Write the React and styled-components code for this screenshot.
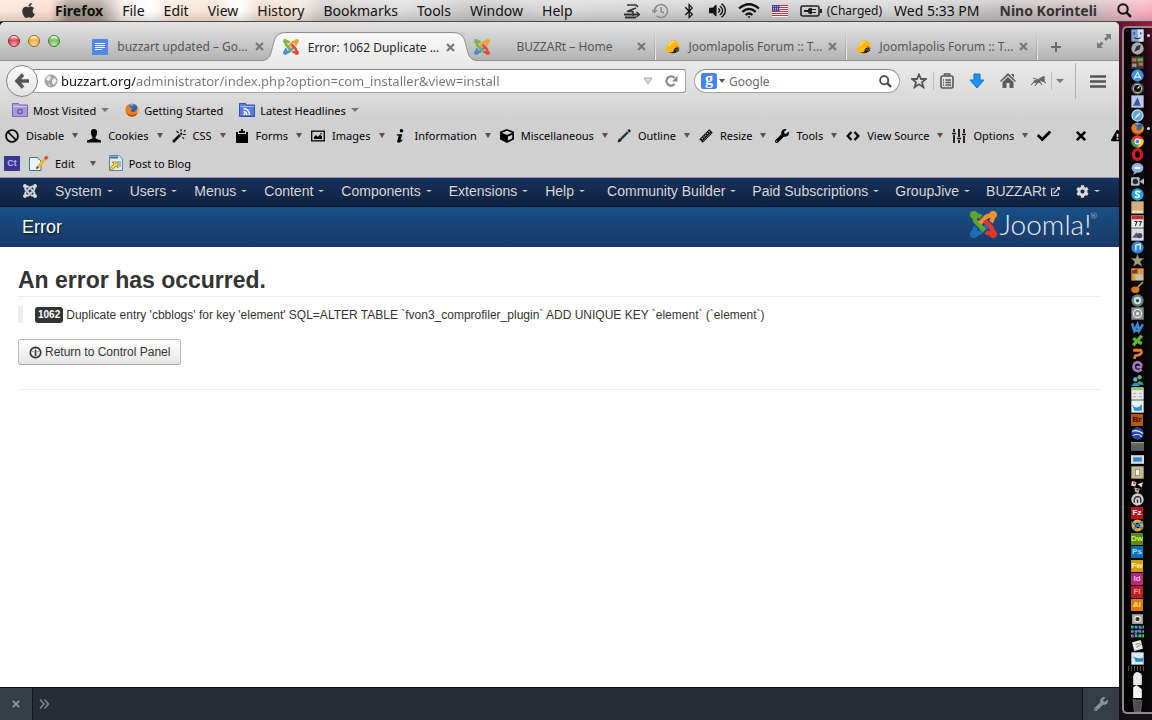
import React from 'react'
import { useState } from 'react'
import styled, { createGlobalStyle } from 'styled-components'
import {
  FaApple, FaBan, FaBluetoothB, FaCheck, FaCog, FaCube, FaExclamationTriangle,
  FaExternalLinkAlt, FaJoomla, FaTimes, FaVolumeUp, FaWrench
} from 'react-icons/fa'

const uiFont = '"Noto Sans", "Open Sans", sans-serif'
const pageFont = '"Liberation Sans", Arial, sans-serif'

const GlobalStyle = createGlobalStyle`
  * { box-sizing: border-box; }
  body { margin: 0; background: #0b0a0c; font-family: ${uiFont}; overflow: hidden; }
  button { font: inherit; color: inherit; background: none; border: 0; padding: 0; margin: 0; cursor: default; }
  a { color: inherit; text-decoration: none; }
  svg { display: block; flex: none; }
`

const Desktop = styled.div`
  display: flex;
  flex-direction: column;
  height: 100vh;
`

const Workspace = styled.div`
  display: flex;
  flex: 1;
  min-height: 0;
  background: radial-gradient(circle at 100% 0, #a01c42 0, #5a1229 40px, #1c0a10 130px, #131113 220px);
`

/* ---------- mac menu bar ---------- */

const MenuBar = styled.header`
  display: flex;
  align-items: center;
  height: 22px;
  flex: none;
  padding: 0 20px;
  border-bottom: 1px solid #4a4546;
  font-size: 14px;
  color: #111;
  white-space: nowrap;
  background:
    linear-gradient(180deg, rgba(255,255,255,.35), rgba(255,255,255,0) 50%, rgba(0,0,0,.12)),
    linear-gradient(90deg, #fde6dc 0, #fbdccd 50px, #a19389 68px, #a79a91 100px, #f3ece8 122px, #fff 150px,
      #fbe8d9 170px, #f6e3d4 215px, #fff 240px, #eed9c6 262px, #f4e6dc 300px, #cfcac8 325px, #ddd 400px,
      #c4c3c3 480px, #d8d8d8 560px, #cbcbcb 760px, #d5d4d5 900px, #c0bcbc 1000px, #cdb9bd 1090px, #f3b5c4 1140px, #f8a9bd 100%);
`

const MenuList = styled.nav`
  display: flex;
  align-items: center;
  gap: 19px;
  margin-left: 18px;
`

const MenuItem = styled.button`
  font-weight: ${p => p.$bold ? 700 : 400};
`

const StatusArea = styled.div`
  display: flex;
  align-items: center;
  gap: 12px;
  margin-left: auto;
`

const StatusText = styled.span`
  margin-left: ${p => p.$bold ? 8 : 0}px;
  font-size: ${p => p.$small ? 12 : 14}px;
  font-weight: ${p => p.$bold ? 700 : 400};
  color: ${p => p.$bold ? '#333' : '#111'};
`

const Power = styled.div`
  display: flex;
  align-items: center;
  gap: 5px;
`

const SearchSlot = styled.button`
  margin-left: 8px;
`

/* ---------- browser ---------- */

const Browser = styled.div`
  display: flex;
  flex-direction: column;
  flex: 1;
  min-width: 0;
  border-radius: 5px 5px 0 0;
  overflow: hidden;
  background: #fff;
`

const TabStrip = styled.div`
  display: flex;
  height: 39px;
  flex: none;
  background: linear-gradient(180deg, #e4e4e4, #d6d6d6 30%, #b4b4b4);
  border-bottom: 1px solid #8e8e8e;
`

const Lights = styled.div`
  display: flex;
  gap: 8px;
  width: 83px;
  flex: none;
  padding: 13px 0 0 8px;
`

const Light = styled.button`
  width: 12px;
  height: 12px;
  border-radius: 50%;
  border: 1px solid ${p => p.$edge};
  background: radial-gradient(circle at 50% 90%, #fff9 0, transparent 60%), linear-gradient(180deg, #fff 5%, ${p => p.$color} 40%, ${p => p.$color});
`

const Tab = styled.div`
  position: relative;
  display: flex;
  align-items: center;
  flex: 0 1 191px;
  min-width: 0;
  padding: 11px 10px 0 9px;
  color: #555;
  font-size: 12px;
  z-index: ${p => p.$active ? 1 : 0};
  ${p => p.$active && `
    height: 29px;
    margin-top: 10px;
    padding-top: 1px;
    background: linear-gradient(180deg, #fafafa, #eaeaea);
    box-shadow: inset 0 1px 0 #8e8e8e, 0 1px 0 #eaeaea;
    color: #222;
  `}
  ${p => p.$divided && `
    background:
      linear-gradient(180deg, transparent 20%, #eee) right / 1px 100% no-repeat,
      linear-gradient(180deg, transparent 20%, #a0a0a0) right 1px top 0 / 1px 100% no-repeat;
  `}
`

const TabCurve = styled.svg`
  position: absolute;
  top: 0;
  ${p => p.$side}: -12px;
  ${p => p.$side === 'right' && 'transform: scaleX(-1);'}
`

const TabIcon = styled.span`
  position: relative;
`

const TabLabel = styled.span`
  position: relative;
  flex: 1;
  padding: 0 4px 0 6px;
  text-align: center;
  overflow: hidden;
  white-space: nowrap;
`

const TabClose = styled.button`
  position: relative;
  color: #777;
`

const TabTail = styled.div`
  display: flex;
  flex: 1;
  justify-content: space-between;
  align-items: flex-start;
  padding: 19px 8px 0 12px;
  color: #666;
`

const FullScreen = styled.button`
  margin-top: -7px;
`

const Toolbars = styled.div`
  flex: none;
  height: 117px;
  background: linear-gradient(180deg, #eaeaea, #d0d0d0 60px, #d0d0d0);
  border-bottom: 1px solid #9a9a9a;
`

const NavBar = styled.div`
  display: flex;
  align-items: center;
  height: 40px;
  padding: 0 13px 0 6px;
`

const BackButton = styled.button`
  position: relative;
  display: grid;
  place-items: center;
  width: 32px;
  height: 32px;
  border: 1px solid #838383;
  border-radius: 50%;
  background: linear-gradient(180deg, #fdfdfd, #e2e2e2);
  z-index: 1;
`

const UrlBox = styled.div`
  display: flex;
  align-items: center;
  flex: 1;
  height: 24px;
  margin-left: -5px;
  padding: 0 7px 0 10px;
  border: 1px solid #a0a0a0;
  border-top-color: #858585;
  border-radius: 0 3px 3px 0;
  background: #fff;
`

const UrlInput = styled.input`
  flex: 1;
  min-width: 0;
  height: 20px;
  margin-left: 3px;
  padding: 0;
  border: 0;
  outline: 0;
  font: 13px ${uiFont};
  color: transparent;
  background: linear-gradient(90deg, #111 74px, #757575 74px);
  background-clip: text;
  -webkit-background-clip: text;
`

const UrlTail = styled.div`
  display: flex;
  align-items: center;
  gap: 12px;
`

const SearchBox = styled.form`
  display: flex;
  align-items: center;
  width: 206px;
  height: 24px;
  margin: 0 11px 0 8px;
  padding: 0 7px 0 6px;
  border: 1px solid #a0a0a0;
  border-top-color: #858585;
  border-radius: 12px;
  background: #fff;
  color: #444;
`

const SearchInput = styled.input`
  flex: 1;
  min-width: 0;
  margin-left: 4px;
  padding: 0;
  border: 0;
  outline: 0;
  background: none;
  font: 12px ${uiFont};
  color: #555;
  &::placeholder { color: #666; opacity: 1; }
`

const Engine = styled.button`
  display: flex;
  align-items: center;
  gap: 2px;
`

const EngineBadge = styled.span`
  width: 16px;
  height: 16px;
  border-radius: 2px;
  background: #4683ee;
  color: #fff;
  text-align: center;
  font: bold 16px/12px "Liberation Serif", serif;
`

const NavIcons = styled.div`
  display: flex;
  align-items: center;
  gap: 15px;
`

const IconPair = styled.div`
  display: flex;
  align-items: center;
  gap: ${p => p.$gap}px;
`

const Rule = styled.span`
  width: 1px;
  height: ${p => p.$tall ? 36 : 18}px;
  margin: ${p => p.$tall ? '0 -1px 0 -4px' : 0};
  background: ${p => p.$tall ? '#a9b4c0' : '#bbb'};
`

const BookmarkBar = styled.div`
  display: flex;
  align-items: center;
  gap: 16px;
  height: 18px;
  padding-left: 12px;
  font-size: 11px;
`

const Bookmark = styled.button`
  display: flex;
  align-items: center;
  gap: 5px;
`

const DevBar = styled.div`
  display: flex;
  align-items: center;
  height: 33px;
  padding-left: 5px;
  font-size: 11px;
  overflow: hidden;
  white-space: nowrap;
`

const DevItem = styled.button`
  display: flex;
  align-items: center;
  flex: none;
  padding-right: ${p => p.$lone ? 23 : 9}px;
`

const DevLabel = styled.span`
  padding: 0 8px 0 7px;
`

const BlogBar = styled.div`
  display: flex;
  align-items: center;
  height: 22px;
  padding-left: 4px;
  font-size: 11px;
`

const BlogItem = styled.button`
  display: flex;
  align-items: center;
  margin-right: ${p => p.$after}px;
`

const BlogLabel = styled.span`
  padding: 0 15px 0 6px;
`

const Caret = styled.span`
  width: 0;
  height: 0;
  flex: none;
  border: ${p => p.$size || 3}px solid transparent;
  border-top: ${p => p.$drop || 5}px solid ${p => p.$color || '#555'};
  border-bottom: 0;
`

/* ---------- joomla page ---------- */

const AdminBar = styled.nav`
  display: flex;
  align-items: center;
  flex: none;
  height: 29px;
  padding: 0 19px 2px 22px;
  background: linear-gradient(180deg, #17315c, #10223e);
  border-bottom: 1px solid #0b1526;
  font: 14px ${pageFont};
  color: #dadada;
  text-shadow: 0 -1px 0 rgba(0,0,0,.3);
  white-space: nowrap;
`

const AdminGroup = styled.div`
  display: flex;
  align-items: center;
  gap: ${p => p.$push ? 16 : 17}px;
  margin-left: ${p => p.$push ? 'auto' : '17px'};
`

const AdminLink = styled.a`
  display: flex;
  align-items: center;
  gap: 5px;
`

const TitleBar = styled.div`
  display: flex;
  align-items: center;
  justify-content: space-between;
  flex: none;
  height: 40px;
  padding: 0 22px;
  background: linear-gradient(180deg, #185085, #1a3867);
`

const PageTitle = styled.h1`
  margin: 0;
  font: 18px ${pageFont};
  color: #fff;
  text-shadow: 1px 1px 2px rgba(0,0,0,.8);
`

const Brand = styled.div`
  display: flex;
  align-items: center;
  gap: 3px;
  margin-bottom: 6px;
  font: 300 28px/28px Lato, sans-serif;
  color: #e8edf5;
`

const Registered = styled.sup`
  align-self: flex-start;
  margin-left: -4px;
  font-size: 8px;
  line-height: 12px;
`

const Main = styled.main`
  flex: 1;
  padding: 18px 18px 0;
  font: 12px ${pageFont};
  color: #333;
`

const Heading = styled.h2`
  margin: 0;
  padding-bottom: 1px;
  border-bottom: 1px solid #eee;
  font: bold 23px/30px ${pageFont};
`

const Message = styled.blockquote`
  display: flex;
  align-items: center;
  gap: 3px;
  margin: 9px 0 16px;
  height: 17px;
  padding-left: 12px;
  border-left: 5px solid #eee;
`

const Code = styled.span`
  padding: 0 3px;
  border-radius: 3px;
  background: #333;
  color: #fff;
  font-size: 10px;
  font-weight: 700;
  line-height: 16px;
`

const ReturnLink = styled.a`
  display: inline-flex;
  align-items: center;
  gap: 3px;
  height: 26px;
  padding: 0 10px;
  border: 1px solid #bbb;
  border-bottom-color: #a2a2a2;
  border-radius: 3px;
  background: linear-gradient(180deg, #fff, #e6e6e6);
`

const Divider = styled.hr`
  margin: 24px 0 0;
  border: 0;
  border-top: 1px solid #eee;
`

const DevConsole = styled.footer`
  display: flex;
  flex: none;
  height: 33px;
  border-top: 1px solid #0d1013;
  background: #252c33;
  color: #8d9399;
`

const ConsoleCell = styled.button`
  display: grid;
  place-items: center;
  width: ${p => p.$width}px;
  margin-left: ${p => p.$end ? 'auto' : 0};
  border: 0 solid #15191d;
  border-width: ${p => p.$end ? '0 0 0 1px' : p.$first ? '0 1px 0 0' : 0};
  background: ${p => p.$first || p.$end ? '#343c45' : 'none'};
`

/* ---------- dock ---------- */

const DockArea = styled.aside`
  display: flex;
  width: 33px;
  flex: none;
  padding: 4px 0 6px 3px;
`

const DockPanel = styled.div`
  display: flex;
  flex-direction: column;
  flex: 1;
  padding: 1px 0 0;
  border: 2px solid #8c8a8c;
  border-right: 0;
  border-radius: 5px 0 0 5px;
  background: linear-gradient(90deg, rgba(0,0,0,.85) 55%, rgba(0,0,0,.45));
`

const DockItem = styled.button`
  display: flex;
  align-items: center;
  flex: 1 1 0;
  min-height: 0;
  padding-left: 7px;
  gap: 3px;
`

const DockSplit = styled.span`
  height: 5px;
  margin: 1px 8px 1px 4px;
  background: repeating-linear-gradient(90deg, #555 0 1px, transparent 1px 3px);
`

const Running = styled.span`
  width: 3px;
  height: 3px;
  border-radius: 50%;
  background: #cfe0ff;
`

const AppTile = styled.span`
  width: ${p => p.$large ? 16 : 12}px;
  height: ${p => p.$large ? 15 : 12}px;
  overflow: hidden;
  background: ${p => p.$bg};
  color: ${p => p.$fg};
  text-align: center;
  font: bold ${p => p.$large ? '9px/15px' : '8px/12px'} ${pageFont};
`

/* ---------- drawings ---------- */

function JoomlaMark({ size, muted }) {
  const colors = muted ? ['#7ab648', '#f5a13a', '#ea4a35', '#4b8fd0'] : ['#5fa52d', '#f78f2c', '#e5352c', '#1a6fb8']
  return (
    <svg width={size} height={size} viewBox="0 0 24 24">
      {colors.map((c, i) => (
        <g key={c} transform={`rotate(${i * 90} 12 12)`} stroke={c} fill="none" strokeWidth="4">
          <circle cx="3.400" cy="3.400" r="3.400" fill={c} stroke="none" />
          <path d="M4 4Q3.600 8.200 5.800 10.200L11 15.400" />
          <path d="M4 4Q8 3.600 9.800 5.400" />
        </g>
      ))}
      <path d="M9 13.400L12.800 17.200" stroke={colors[0]} strokeWidth="4" />
    </svg>
  )
}

function CloseX({ size }) {
  return (
    <svg width={size} height={size} viewBox="0 0 9 9" stroke="currentColor" strokeWidth="2.200">
      <path d="M1 1L8 8M8 1L1 8" />
    </svg>
  )
}

function Magnifier({ size }) {
  return (
    <svg width={size} height={size} viewBox="0 0 14 14" fill="none" stroke="currentColor">
      <circle cx="5.600" cy="5.600" r="4.400" strokeWidth="1.900" />
      <path d="M9 9L13 13" strokeWidth="2.400" />
    </svg>
  )
}

function Hat() {
  return (
    <svg width="16" height="16" viewBox="0 0 16 16">
      <path d="M3 13Q9 16 14.500 11.500L12 8L6 10Z" fill="#2c2010" />
      <path d="M.5 11C1 9 2 9 2.500 7.500C3 3 6 1 9 1.300C12.500 1.800 14.500 5 14.500 9C12 7.500 9 8.500 8.500 12C7 14.500 1 14 .5 11Z" fill="#fbb912" />
      <path d="M4 7Q5 3 9 2.800" stroke="#ffde70" strokeWidth="1.500" fill="none" />
      <path d="M11 7.500L14.500 9.500" stroke="#d4401e" strokeWidth="1.300" />
      <path d="M10 10.500L13.500 11.500" stroke="#5b8d2a" />
    </svg>
  )
}

function FoxBall({ size }) {
  return (
    <svg width={size} height={size} viewBox="0 0 16 16">
      <circle cx="8" cy="8" r="7.500" fill="#e8701a" />
      <circle cx="8.800" cy="6.200" r="5.200" fill="#2b62b0" />
      <path d="M5 1.500Q9 0 12 3Q8 2 7 4Z" fill="#63b5e8" />
      <path d="M.6 6Q2 2 4 2.500L6 5L9 6.500Q6 7 7 9.500Q10 12 13 8L15.300 6Q16 14 9 15.500Q1 15.500 .6 6" fill="#ee7c1b" />
      <path d="M1 9Q3 14 8 14Q12 14 14.500 10Q13 15.500 8 15.500Q2 15 1 9" fill="#c43a14" />
      <path d="M14.800 4Q16.500 9 13 12.500Q14.500 8 14.800 4" fill="#ffd23c" />
    </svg>
  )
}

function Folder({ top, bottom, children }) {
  return (
    <svg width="16" height="14" viewBox="0 0 16 14">
      <path d="M.5 .5H6.500L7.500 2H15.500V13.500H.5Z" fill={bottom} stroke={top} />
      <path d="M1 3.500H15" stroke="#fff" strokeOpacity=".5" />
      {children}
    </svg>
  )
}

function Flag() {
  return (
    <svg width="16" height="12" viewBox="0 0 16 12">
      <rect width="16" height="12" fill="#f4f0f0" />
      <path d="M0 .5H16M0 2.500H16M0 4.500H16M0 6.500H16M0 8.500H16M0 10.500H16" stroke="#c0303c" />
      <rect width="8" height="6" fill="#3b4a8c" />
      <path d="M1 1.500H8M1 3.500H8M1 5H8" stroke="#aab4e0" strokeDasharray="1 1" />
    </svg>
  )
}

const devIcons = {
  Disable: <FaBan size={14} />,
  Cookies: <svg width="14" height="14" viewBox="0 0 14 14"><path d="M7 0C9.500 0 10.500 2 10 4.500Q9.500 7 8.500 8V9.500L14 11.500V13.500H0V11.500L5.500 9.500V8Q4.500 7 4 4.500C3.500 2 4.500 0 7 0Z" /></svg>,
  CSS: <svg width="14" height="14" viewBox="0 0 14 14" stroke="#111" fill="none"><path d="M1 13L8 6" strokeWidth="2.600" /><path d="M8.500 5.500L10 4" strokeWidth="2" /><path d="M9 0V2.500M4.500 2L6.500 4M13.500 1L12 2.500M11 5.500H14M10.500 8L12 10" strokeWidth="1.200" /></svg>,
  Forms: <svg width="14" height="14" viewBox="0 0 14 14"><path d="M1 3H3V5H11V3H13V14H1ZM4 2H6V0H8V2H10V4H4Z" /></svg>,
  Images: <svg width="14" height="12" viewBox="0 0 14 12"><rect x=".7" y="1.200" width="12.600" height="9.600" fill="none" stroke="#111" strokeWidth="1.400" /><path d="M3 9V7L5 5L7 7L9 4.500L11 6.500V9Z" /><circle cx="10" cy="3.800" r=".8" /></svg>,
  Information: <svg width="14" height="14" viewBox="0 0 14 14"><circle cx="7.500" cy="1.800" r="1.800" /><path d="M3 5.200H8.300L6.500 11.500L8.500 10.500L8.500 11.500Q6 14 4 13.800Q2.800 13.400 3.300 11.500L4.800 6.500H2.800Z" /></svg>,
  Miscellaneous: <FaCube size={14} />,
  Outline: <svg width="14" height="14" viewBox="0 0 14 14"><path d="M.5 13.500L2 9.500L4.500 12Z" /><path d="M3 11L11 3" stroke="#333" strokeWidth="2.400" /><path d="M11.500 2.500L13 1" stroke="#111" strokeWidth="2.600" /></svg>,
  Resize: <svg width="14" height="14" viewBox="0 0 14 14"><path d="M2 12L12 2" stroke="#111" strokeWidth="5" /><path d="M3 10L10.500 2.500" stroke="#ddd" strokeDasharray="1 1.400" strokeWidth="1.200" /><path d="M4 12L12 4" stroke="#777" strokeWidth=".8" /></svg>,
  Tools: <FaWrench size={14} />,
  'View Source': <svg width="14" height="14" viewBox="0 0 14 14" fill="none" stroke="#111" strokeWidth="2.400"><path d="M5.500 3L1.700 7L5.500 11M8.500 3L12.300 7L8.500 11" /></svg>,
  Options: <svg width="14" height="14" viewBox="0 0 14 14" stroke="#111" strokeWidth="1.800"><path d="M2 0V3M2 6V14M7 0V8M7 11V14M12 0V4M12 7V14" /><path d="M0 4.500H4M5 9.500H9M10 5.500H14" strokeWidth="1.600" /></svg>
}

const tabs = [
  { title: 'buzzart updated – Go...', icon: 'docs' },
  { title: 'Error: 1062 Duplicate ...', icon: 'joomla', active: true },
  { title: 'BUZZARt – Home', icon: 'joomla', divided: true },
  { title: 'Joomlapolis Forum :: T...', icon: 'hat', divided: true },
  { title: 'Joomlapolis Forum :: T...', icon: 'hat', divided: true }
]

const tabIcons = {
  docs: (
    <svg width="16" height="16" viewBox="0 0 16 16">
      <rect width="16" height="16" rx="1" fill="#4f87ee" />
      <path d="M3 4.500H13M3 6.500H13M3 8.500H13M3 10.500H10" stroke="#fff" />
    </svg>
  ),
  joomla: <JoomlaMark size={16} muted />,
  hat: <Hat />
}

// small round or square pictures of the dock, drawn in a 12x12 box
const disc = (fill, extra) => <><circle cx="6" cy="6" r="5.700" fill={fill} />{extra}</>
const slab = (fill, extra) => <><rect x=".3" y=".3" width="11.400" height="11.400" fill={fill} />{extra}</>

const dockApps = [
  { name: 'Finder', running: true, art: slab('#7ea3dc', <><path d="M6 .5H11.500V11.500H7Z" fill="#d5e0f0" /><path d="M3 3V5M9 3V5M3 8Q6 10 9 8" stroke="#223" fill="none" /></>) },
  { name: 'Launchpad', art: disc('#a9adb0', <path d="M3 9L5 4L9 2.500L8 7Z" fill="#333" />) },
  { name: 'Mission Control', art: slab('#3b3f42', <><path d="M1 2H5V5H1ZM7 6H11V9H7Z" fill="#c86a35" /><path d="M6 2H11V5H6Z" fill="#6aa84f" /><path d="M1 7H5V10H1Z" fill="#999" /></>) },
  { name: 'App Store', art: disc('#3f8fe0', <path d="M3 9L6 3L9 9M3 7.500H9" stroke="#e8f3ff" fill="none" />) },
  { name: 'Dashboard', art: disc('#555', <><circle cx="6" cy="6" r="3.800" fill="#111" stroke="#bbb" /><path d="M6 6L8 4" stroke="#fff" /></>) },
  { name: 'Mail', art: slab('#b9cbe8', <path d="M2 10L6 2L9 10Z" fill="#3d5b9c" />) },
  { name: 'Safari', art: disc('#5aa5dc', <><circle cx="6" cy="6" r="5" fill="none" stroke="#cfd6da" /><path d="M3 9L5.500 5L9 3L7 7Z" fill="#f3f3f3" /></>) },
  { name: 'Firefox', running: true, fox: true },
  { name: 'Chrome', art: disc('#e33b2e', <><path d="M.8 3.500A5.700 5.700 0 0 0 6 11.700L8 7.500L4 7.500Z" fill="#3ba648" /><path d="M6 4H11.300A5.700 5.700 0 0 1 6 11.700L8 7Z" fill="#f8cf2c" /><circle cx="6" cy="6" r="2.300" fill="#4a86e8" stroke="#fff" /></>) },
  { name: 'Opera', art: <ellipse cx="6" cy="6" rx="3.800" ry="4.500" fill="none" stroke="#d8162a" strokeWidth="3" /> },
  { name: 'Messages', art: <><ellipse cx="6" cy="5.500" rx="5.500" ry="4.500" fill="#8eb0f0" /><path d="M3 9L2 12L6 9.500" fill="#8eb0f0" /><path d="M3 5.500H9" stroke="#fff" strokeWidth="2" /></> },
  { name: 'FaceTime', art: <><rect y="2" width="8" height="8" rx="1" fill="#b8bcc0" /><circle cx="4" cy="6" r="2.500" fill="#1c2a44" /><path d="M8 6L12 3V9Z" fill="#b8bcc0" /></> },
  { name: 'Skype', art: disc('#1ba5e8', <path d="M8.500 4Q6 2.500 4.500 3.700Q3.500 5.300 6 6Q8.500 6.700 7.600 8Q6 9.400 3.500 8" stroke="#fff" strokeWidth="1.500" fill="none" />) },
  { name: 'Contacts', art: slab('#d2b27a', <path d="M1 10H11" stroke="#f3e3bc" strokeWidth="2" />) },
  { name: 'Calendar', art: slab('#f0f0f0', <><path d="M.5 .5H11.500V4H.5Z" fill="#c62f25" /><path d="M3 6H5.500L4 10M7 6H9.500L8 10" stroke="#222" fill="none" /></>) },
  { name: 'Photos', art: slab('#d9dde3', <><path d="M1 9L5 4L8 9Z" fill="#565c74" /><circle cx="8" cy="7" r="2.500" fill="#3d4a66" /></>) },
  { name: 'iTunes', art: disc('#2f86da', <path d="M4.500 9V3.500L8.500 3V8" stroke="#e3f1ff" fill="none" strokeWidth="1.300" />) },
  { name: 'iMovie', art: <path d="M6 0L7.500 4H12L8.500 7L10 11.500L6 9L2 11.500L3.500 7L0 4H4.500Z" fill="#a59c7f" stroke="#555" strokeWidth=".5" /> },
  { name: 'Photo Booth', art: slab('#df9a38', <><path d="M1 2L6 1V5H1Z" fill="#7c3a1c" /><rect x="4" y="6" width="7" height="5" fill="#bfc3c9" /></>) },
  { name: 'GarageBand', art: <><path d="M6 6L11 1" stroke="#c99b5b" strokeWidth="1.500" /><ellipse cx="4" cy="8" rx="3.800" ry="3" fill="#d97726" /></> },
  { name: 'Time Machine', art: disc('#5f7f80', <><circle cx="6" cy="6" r="3.500" fill="#cfe0dd" /><circle cx="6" cy="6" r="1.500" fill="#25474a" /></>) },
  { name: 'Preferences', art: slab('#8b8e92', <><circle cx="6" cy="6" r="3.800" fill="none" stroke="#eee" /><circle cx="6" cy="6" r="1.500" fill="#eee" /></>) },
  { name: 'Word', art: <path d="M1 2L3 9L6 3L7.500 9L11 3M3 9H8" stroke="#3b87cf" strokeWidth="2.400" fill="none" /> },
  { name: 'Excel', art: <path d="M2 10.500L10 1.500M2 4L10 9" stroke="#5cb335" strokeWidth="3" /> },
  { name: 'PowerPoint', art: <path d="M2 3H9Q11 6 7 7.500L4 8L3 11" stroke="#e57a2e" strokeWidth="2.600" fill="none" /> },
  { name: 'Entourage', art: <path d="M10 8.500Q6 12 3 8.500Q1 3 6 2Q11 3 9 6.500H5" stroke="#a277c2" strokeWidth="2.600" fill="none" /> },
  { name: 'Messenger', art: <><circle cx="8" cy="3" r="2" fill="#6cb36c" /><path d="M5 10Q8 3 12 10Z" fill="#3fa06f" /><circle cx="4" cy="5" r="2" fill="#5cb8e6" /><path d="M0 11Q4 5 8 11Z" fill="#2e94cf" /></> },
  { name: 'Pages', art: slab('#e9ebee', <><path d="M1 2H11" stroke="#8cc06a" strokeWidth="2" /><path d="M2 6H5M7 6H10M2 9H5M7 9H10" stroke="#c99" /></>) },
  { name: 'Preview', art: slab('#e8f2f8', <path d="M1 4Q5 10 10 4V10H3Z" fill="#2d8fd2" />) },
  { name: 'Bridge', label: 'Br', bg: '#b8560d', fg: '#2b1200' },
  { name: 'Earth', art: disc('#2747b5', <path d="M1 4Q6 2 11 6M2 8Q6 5 10 9" stroke="#e7efff" fill="none" />) },
  { name: 'Terminal', art: <><rect y="2" width="12" height="8" fill="#5c615c" /><path d="M0 2.500H12" stroke="#aaa" /></> },
  { name: 'Printer', art: <><rect y="2" width="12" height="8" fill="#d7dde0" /><rect x="2" y="4" width="8" height="4" fill="#3f84c4" /></> },
  { name: 'Archive', art: slab('#c9bb8b', <rect x="4" y="3" width="4" height="6" fill="#f5f1e0" stroke="#555" strokeWidth=".5" />) },
  { name: 'Cards', art: <><path d="M1 1L5 2L4 6L0 5ZM6 4L11 2L10 7Z" fill="#ddd" /><path d="M3 7L8 8L7 12L4 11Z" fill="#b9b9b9" /><path d="M2 3H4M5 9H7" stroke="#c22" strokeWidth="1.500" /></> },
  { name: 'Mamp', art: disc('#cfd1d1', <path d="M3 9V6Q4 3 6 3.500Q9 3 9 6V9M6 9V6" stroke="#333" fill="none" strokeWidth="1.300" />) },
  { name: 'FileZilla', label: 'Fz', bg: '#c0121b', fg: '#fff' },
  { name: 'Cyberduck', art: <><circle cx="6" cy="6" r="4" fill="none" stroke="#f0a81e" strokeWidth="3" /><path d="M0 3L6 6L11 2M2 10L6 6L11 9" stroke="#2f8ed1" strokeWidth="1.500" fill="none" /></> },
  { name: 'Dreamweaver', label: 'Dw', bg: '#5d8a12', fg: '#c9f060' },
  { name: 'Photoshop', label: 'Ps', bg: '#0b6fb4', fg: '#9be0ff' },
  { name: 'Fireworks', label: 'Fw', bg: '#cf9f0b', fg: '#fff0a0' },
  { name: 'InDesign', label: 'Id', bg: '#b32a7c', fg: '#ffb6e2' },
  { name: 'Flash', label: 'Fl', bg: '#b51f28', fg: '#ff9a92' },
  { name: 'Illustrator', label: 'Ai', bg: '#e27b06', fg: '#ffe08a' },
  { name: 'Capture', art: <><rect x="1" y="2" width="10" height="9" fill="#a8aaa6" /><circle cx="6" cy="6.500" r="2.500" fill="#333" stroke="#eee" /></> },
  { name: 'Colors', art: <><path d="M0 2H12M0 6H12M0 10H12" stroke="#29b8c4" strokeWidth="2.500" strokeDasharray="2.500 1" /><path d="M1 11L11 1" stroke="#d22fb0" strokeWidth="2" strokeDasharray="2 1.500" /><path d="M7 10H12" stroke="#6ac62f" strokeWidth="2.500" strokeDasharray="2.500 1" /></> },
  { name: 'TextEdit', art: <><path d="M1 3L9 1L11 9L3 11Z" fill="#e9e9e6" /><path d="M4 5L8 4M5 8L9 5" stroke="#888" /></> },
  { name: 'Pictures', art: slab('#dcebf5', <path d="M1 4Q4 6 4 9H11V5Q7 7 1 4Z" fill="#2a86c8" />) }
]

const dockDocs = [
  { name: 'Documents', art: <path d="M2 12V4Q3 0 6 0Q10 1 10 4V12Z" fill="#e6e8ea" /> },
  { name: 'Downloads', art: <path d="M2 12V2L5 0L10 4V12Z" fill="#f4f5f6" /> },
  { name: 'Trash', art: <path d="M2 1H10L9 12H3Z" fill="#4b4d4e" stroke="#85878a" strokeDasharray="1 1" /> }
]

const adminLeft = ['System', 'Users', 'Menus', 'Content', 'Components', 'Extensions', 'Help']
const adminRight = ['Community Builder', 'Paid Subscriptions', 'GroupJive']

function DockEntry({ app }) {
  return (
    <DockItem aria-label={app.name}>
      {app.label && <AppTile $bg={app.bg} $fg={app.fg}>{app.label}</AppTile>}
      {app.fox && <FoxBall size={13} />}
      {app.art && <svg width="13" height="13" viewBox="0 0 12 12">{app.art}</svg>}
      {app.running && <Running />}
    </DockItem>
  )
}

function SystemBar() {
  return (
    <MenuBar>
      <FaApple size={17} color="#333" />
      <MenuList>
        <MenuItem $bold>Firefox</MenuItem>
        {['File', 'Edit', 'View', 'History', 'Bookmarks', 'Tools', 'Window', 'Help'].map(m => (
          <MenuItem key={m}>{m}</MenuItem>
        ))}
      </MenuList>
      <StatusArea>
        <svg width="16" height="16" viewBox="0 0 16 16" fill="none" stroke="#333">
          <path d="M3 2H12L14 4" strokeWidth="1.600" />
          <path d="M12 5L3 8.500H9" strokeWidth="1.500" />
          <path d="M0 11.500H15M1 14.500H12" strokeWidth="1.800" />
          <path d="M9 8V13M12.500 9L15.500 11.500L12.500 14" strokeWidth="1.500" />
        </svg>
        <svg width="17" height="16" viewBox="0 0 17 16" fill="none" stroke="#888" strokeWidth="1.500">
          <path d="M2.500 8A6.500 6.500 0 1 1 4.500 12.700M0 7L2.500 9.500L5 7M9 4V8.500L12 10" />
        </svg>
        <FaBluetoothB size={16} />
        <FaVolumeUp size={17} />
        <svg width="22" height="16" viewBox="0 0 22 16" fill="none" stroke="#111" strokeWidth="2.200">
          <path d="M1 5.500Q11 -3 21 5.500M4.300 8.800Q11 3 17.700 8.800M7.600 12Q11 9 14.400 12" />
          <circle cx="11" cy="14" r="1" fill="#111" stroke="none" />
        </svg>
        <Flag />
        <Power>
          <svg width="22" height="12" viewBox="0 0 22 12">
            <rect x="1" y="1" width="18" height="10" rx="2" fill="none" stroke="#222" strokeWidth="1.600" />
            <path d="M20 4H22V8H20ZM4 5H8V4Q12 1.500 12 4H16V5H12V7H16V8H12Q12 10.500 8 8V7H4Z" fill="#222" />
          </svg>
          <StatusText $small>(Charged)</StatusText>
        </Power>
        <StatusText>Wed 5:33 PM</StatusText>
        <StatusText $bold>Nino Korinteli</StatusText>
        <SearchSlot aria-label="Spotlight"><Magnifier size={15} /></SearchSlot>
      </StatusArea>
    </MenuBar>
  )
}

function TabRow() {
  return (
    <TabStrip>
      <Lights>
        <Light aria-label="Close" $color="#e0384a" $edge="#8c2731" />
        <Light aria-label="Minimize" $color="#f0ac30" $edge="#93661a" />
        <Light aria-label="Zoom" $color="#6cc04a" $edge="#41752b" />
      </Lights>
      {tabs.map((tab, i) => (
        <Tab key={i} $active={tab.active} $divided={tab.divided}>
          {tab.active && ['left', 'right'].map(side => (
            <TabCurve key={side} $side={side} width="25" height="30" viewBox="0 0 25 30">
              <defs>
                <linearGradient id={'tab-' + side} x1="0" y1="0" x2="0" y2="1">
                  <stop offset="0" stopColor="#fafafa" />
                  <stop offset="1" stopColor="#eaeaea" />
                </linearGradient>
              </defs>
              <path d="M12 0H25V4L12 14Z" fill="#cfcfcf" />
              <path d="M0 29C9 28 9 20 11 13C13 4 16 .5 25 .5V30H0Z" fill={`url(#tab-${side})`} />
              <path d="M0 28.500C9 28 9 20 11 13C13 4 16 .5 25 .5" fill="none" stroke="#8e8e8e" />
            </TabCurve>
          ))}
          <TabIcon>{tabIcons[tab.icon]}</TabIcon>
          <TabLabel>{tab.title}</TabLabel>
          <TabClose aria-label={'Close ' + tab.title}><CloseX size={9} /></TabClose>
        </Tab>
      ))}
      <TabTail>
        <button aria-label="New tab">
          <svg width="12" height="12" viewBox="0 0 12 12" stroke="currentColor" strokeWidth="2"><path d="M6 1V11M1 6H11" /></svg>
        </button>
        <FullScreen aria-label="Full screen">
          <svg width="14" height="14" viewBox="0 0 14 14" fill="currentColor">
            <path d="M8 0H14V6L12 4L9 7L7 5L10 2ZM6 14H0V8L2 10L4.500 7.500L6.500 9.500L4 12Z" fillOpacity=".8" />
          </svg>
        </FullScreen>
      </TabTail>
    </TabStrip>
  )
}

function NavRow() {
  const [url, setUrl] = useState('buzzart.org/administrator/index.php?option=com_installer&view=install')
  const [query, setQuery] = useState('')

  return (
    <NavBar>
      <BackButton aria-label="Back">
        <svg width="16" height="16" viewBox="0 0 16 16" fill="none" stroke="#555" strokeWidth="3.600">
          <path d="M9 1.500L3 8L9 14.500M3 8H15" />
        </svg>
      </BackButton>
      <UrlBox>
        <svg width="14" height="14" viewBox="0 0 14 14">
          <circle cx="7" cy="7" r="6.500" fill="#a3a3a3" />
          <path d="M3 3L6 1.500L7 4L5 7L2 6ZM8 6L11 4L12.500 7L10 11L8 9ZM4 9L6 10L6 12.500Z" fill="#efefef" />
        </svg>
        <UrlInput aria-label="Address" value={url} onChange={e => setUrl(e.target.value)} />
        <UrlTail>
          <svg width="10" height="8" viewBox="0 0 10 8" fill="#ddd" stroke="#aaa"><path d="M1 1H9L5 7Z" /></svg>
          <button aria-label="Reload">
            <svg width="13" height="12" viewBox="0 0 13 12" fill="none" stroke="#888" strokeWidth="2.200">
              <path d="M9.500 9A4.600 4.600 0 1 1 9.500 3" />
              <path d="M7 6.500H12.500V.5Z" fill="#888" stroke="none" />
            </svg>
          </button>
        </UrlTail>
      </UrlBox>
      <SearchBox onSubmit={e => e.preventDefault()}>
        <Engine type="button" aria-label="Search engine">
          <EngineBadge>g</EngineBadge>
          <Caret $size={3} $drop={4} />
        </Engine>
        <SearchInput aria-label="Search" placeholder="Google" value={query} onChange={e => setQuery(e.target.value)} />
        <button aria-label="Go"><Magnifier size={13} /></button>
      </SearchBox>
      <NavIcons>
        <IconPair $gap={6}>
          <button aria-label="Bookmark this page">
            <svg width="16" height="16" viewBox="0 0 16 16"><path d="M8 1.500L10 6H14.800L11 9.200L12.400 14.200L8 11.300L3.600 14.200L5 9.200L1.200 6H6Z" fill="none" stroke="#555" strokeWidth="1.800" /></svg>
          </button>
          <Rule />
          <button aria-label="Bookmarks">
            <svg width="14" height="16" viewBox="0 0 14 16" fill="none" stroke="#555" strokeWidth="1.600">
              <rect x="1" y="3" width="12" height="12" rx="1.500" /><path d="M4.500 3V1H9.500V3M3 7H4M5.500 7H11M3 9.500H4M5.500 9.500H11M3 12H4M5.500 12H11" />
            </svg>
          </button>
        </IconPair>
        <button aria-label="Downloads">
          <svg width="16" height="16" viewBox="0 0 16 16"><path d="M5 1H11V7H15L8 15L1 7H5Z" fill="#2090f5" stroke="#1a6fc4" /></svg>
        </button>
        <button aria-label="Home">
          <svg width="16" height="16" viewBox="0 0 16 16" fill="#5a5a5a"><path d="M8 0L16 8L15 9L8 2.500L1 9L0 8ZM11.500 1H14V4.500L11.500 2ZM8 4L13.500 9V15H9.500V10H6.500V15H2.500V9Z" /></svg>
        </button>
        <IconPair $gap={4}>
          <button aria-label="Firebug">
            <svg width="16" height="12" viewBox="0 0 16 12" fill="#666" stroke="#555">
              <path d="M2 3L7 4.500L12 1.500L14 2L9 6Z" strokeWidth=".5" /><ellipse cx="6" cy="6.500" rx="3.500" ry="1.800" stroke="none" />
              <circle cx="12" cy="5" r="2" stroke="none" /><path d="M3 7L0 10M6 8L4 11M9 7L11 10M12 6L15 8" fill="none" />
            </svg>
          </button>
          <Rule />
          <Caret $size={4} $drop={4} $color="#777" />
        </IconPair>
        <Rule $tall />
        <button aria-label="Menu">
          <svg width="16" height="13" viewBox="0 0 16 13" stroke="#555" strokeWidth="2.600"><path d="M0 1.500H16M0 6.500H16M0 11.500H16" /></svg>
        </button>
      </NavIcons>
    </NavBar>
  )
}

function AdminMenu({ items }) {
  return items.map(item => (
    <AdminLink key={item} href="#">{item}<Caret $size={3} $drop={2} $color="#ccc" /></AdminLink>
  ))
}

function App() {
  return (
    <Desktop>
      <GlobalStyle />
      <SystemBar />
      <Workspace>
        <Browser>
          <TabRow />
          <Toolbars>
            <NavRow />
            <BookmarkBar>
              <Bookmark>
                <Folder top="#7468ae" bottom="#a99bd8"><circle cx="8" cy="8.500" r="2.200" fill="none" stroke="#6a5ab0" strokeWidth="1.600" /></Folder>
                Most Visited <Caret $size={4} $drop={4} $color="#777" />
              </Bookmark>
              <Bookmark><FoxBall size={14} />Getting Started</Bookmark>
              <Bookmark>
                <Folder top="#3450b5" bottom="#5877e0"><path d="M4.500 5.500Q10.500 6 10.500 12M4.500 8.500Q7.800 9 7.800 12" fill="none" stroke="#fff" strokeWidth="1.400" /><circle cx="5.300" cy="11.300" r="1" fill="#fff" /></Folder>
                Latest Headlines <Caret $size={4} $drop={4} $color="#777" />
              </Bookmark>
            </BookmarkBar>
            <DevBar>
              {Object.keys(devIcons).map(name => (
                <DevItem key={name}>
                  {devIcons[name]}
                  <DevLabel>{name}</DevLabel>
                  <Caret />
                </DevItem>
              ))}
              <DevItem $lone aria-label="Valid"><FaCheck size={14} /></DevItem>
              <DevItem $lone aria-label="Errors"><FaTimes size={14} /></DevItem>
              <DevItem $lone aria-label="Warnings"><FaExclamationTriangle size={13} /></DevItem>
            </DevBar>
            <BlogBar>
              <BlogItem $after={9}>
                <AppTile $large $bg="#3b3690" $fg="#b9b6ff">Ct</AppTile>
              </BlogItem>
              <BlogItem $after={13}>
                <svg width="20" height="15" viewBox="0 0 20 15">
                  <path d="M.5 1.500H8L12 5V14.500H.5Z" fill="#eaf6fb" stroke="#3f6f8c" /><path d="M9 11L17 2" stroke="#f0b92c" strokeWidth="3" /><path d="M16 3L18.500 .5" stroke="#d5434f" strokeWidth="3" /><path d="M7 13L8 10L10 12Z" fill="#333" />
                </svg>
                <BlogLabel>Edit</BlogLabel>
                <Caret />
              </BlogItem>
              <BlogItem $after={0}>
                <svg width="14" height="16" viewBox="0 0 14 16">
                  <path d="M.5 .5H10L13.500 4V15.500H.5Z" fill="#dcebf3" stroke="#5b87a3" /><path d="M1 2.500H9" stroke="#44708c" strokeWidth="2" /><path d="M9 7H12M10 9H12M10 11H12" stroke="#5b87a3" /><path d="M1 15V13L5 9L3 7H9V13L7 11L3 15Z" fill="#f7cf3e" stroke="#8c6a14" strokeWidth=".7" />
                </svg>
                <BlogLabel>Post to Blog</BlogLabel>
              </BlogItem>
            </BlogBar>
          </Toolbars>

          <AdminBar>
            <FaJoomla size={16} />
            <AdminGroup><AdminMenu items={adminLeft} /></AdminGroup>
            <AdminGroup $push>
              <AdminMenu items={adminRight} />
              <AdminLink href="#">BUZZARt<FaExternalLinkAlt size={9} /></AdminLink>
              <AdminLink href="#" aria-label="Settings"><FaCog size={13} /><Caret $size={3} $drop={2} $color="#ccc" /></AdminLink>
            </AdminGroup>
          </AdminBar>
          <TitleBar>
            <PageTitle>Error</PageTitle>
            <Brand><JoomlaMark size={27} />Joomla!<Registered>®</Registered></Brand>
          </TitleBar>
          <Main>
            <Heading>An error has occurred.</Heading>
            <Message>
              <Code>1062</Code>
              Duplicate entry 'cbblogs' for key 'element' SQL=ALTER TABLE `fvon3_comprofiler_plugin` ADD UNIQUE KEY `element` (`element`)
            </Message>
            <ReturnLink href="#">
              <svg width="13" height="13" viewBox="0 0 13 13" fill="none" stroke="#333">
                <circle cx="6.500" cy="6.500" r="5.200" strokeWidth="1.700" />
                <path d="M6.500 4V10" strokeWidth="1.600" />
                <path d="M3.500 5.500L4.500 5.800M9.500 5.500L8.500 5.800M6.500 2.500V3.500" />
              </svg>
              Return to Control Panel
            </ReturnLink>
            <Divider />
          </Main>
          <DevConsole>
            <ConsoleCell $first $width={33} aria-label="Close console"><CloseX size={8} /></ConsoleCell>
            <ConsoleCell $width={22} aria-label="Expand">
              <svg width="11" height="10" viewBox="0 0 11 10" fill="none" stroke="currentColor" strokeWidth="1.300"><path d="M1 .5L5 5L1 9.500M5.500 .5L9.500 5L5.500 9.500" /></svg>
            </ConsoleCell>
            <ConsoleCell $end $width={37} aria-label="Tools"><FaWrench size={14} /></ConsoleCell>
          </DevConsole>
        </Browser>
        <DockArea>
          <DockPanel>
            {dockApps.map(app => <DockEntry key={app.name} app={app} />)}
            <DockSplit />
            {dockDocs.map(app => <DockEntry key={app.name} app={app} />)}
          </DockPanel>
        </DockArea>
      </Workspace>
    </Desktop>
  )
}

export default App
